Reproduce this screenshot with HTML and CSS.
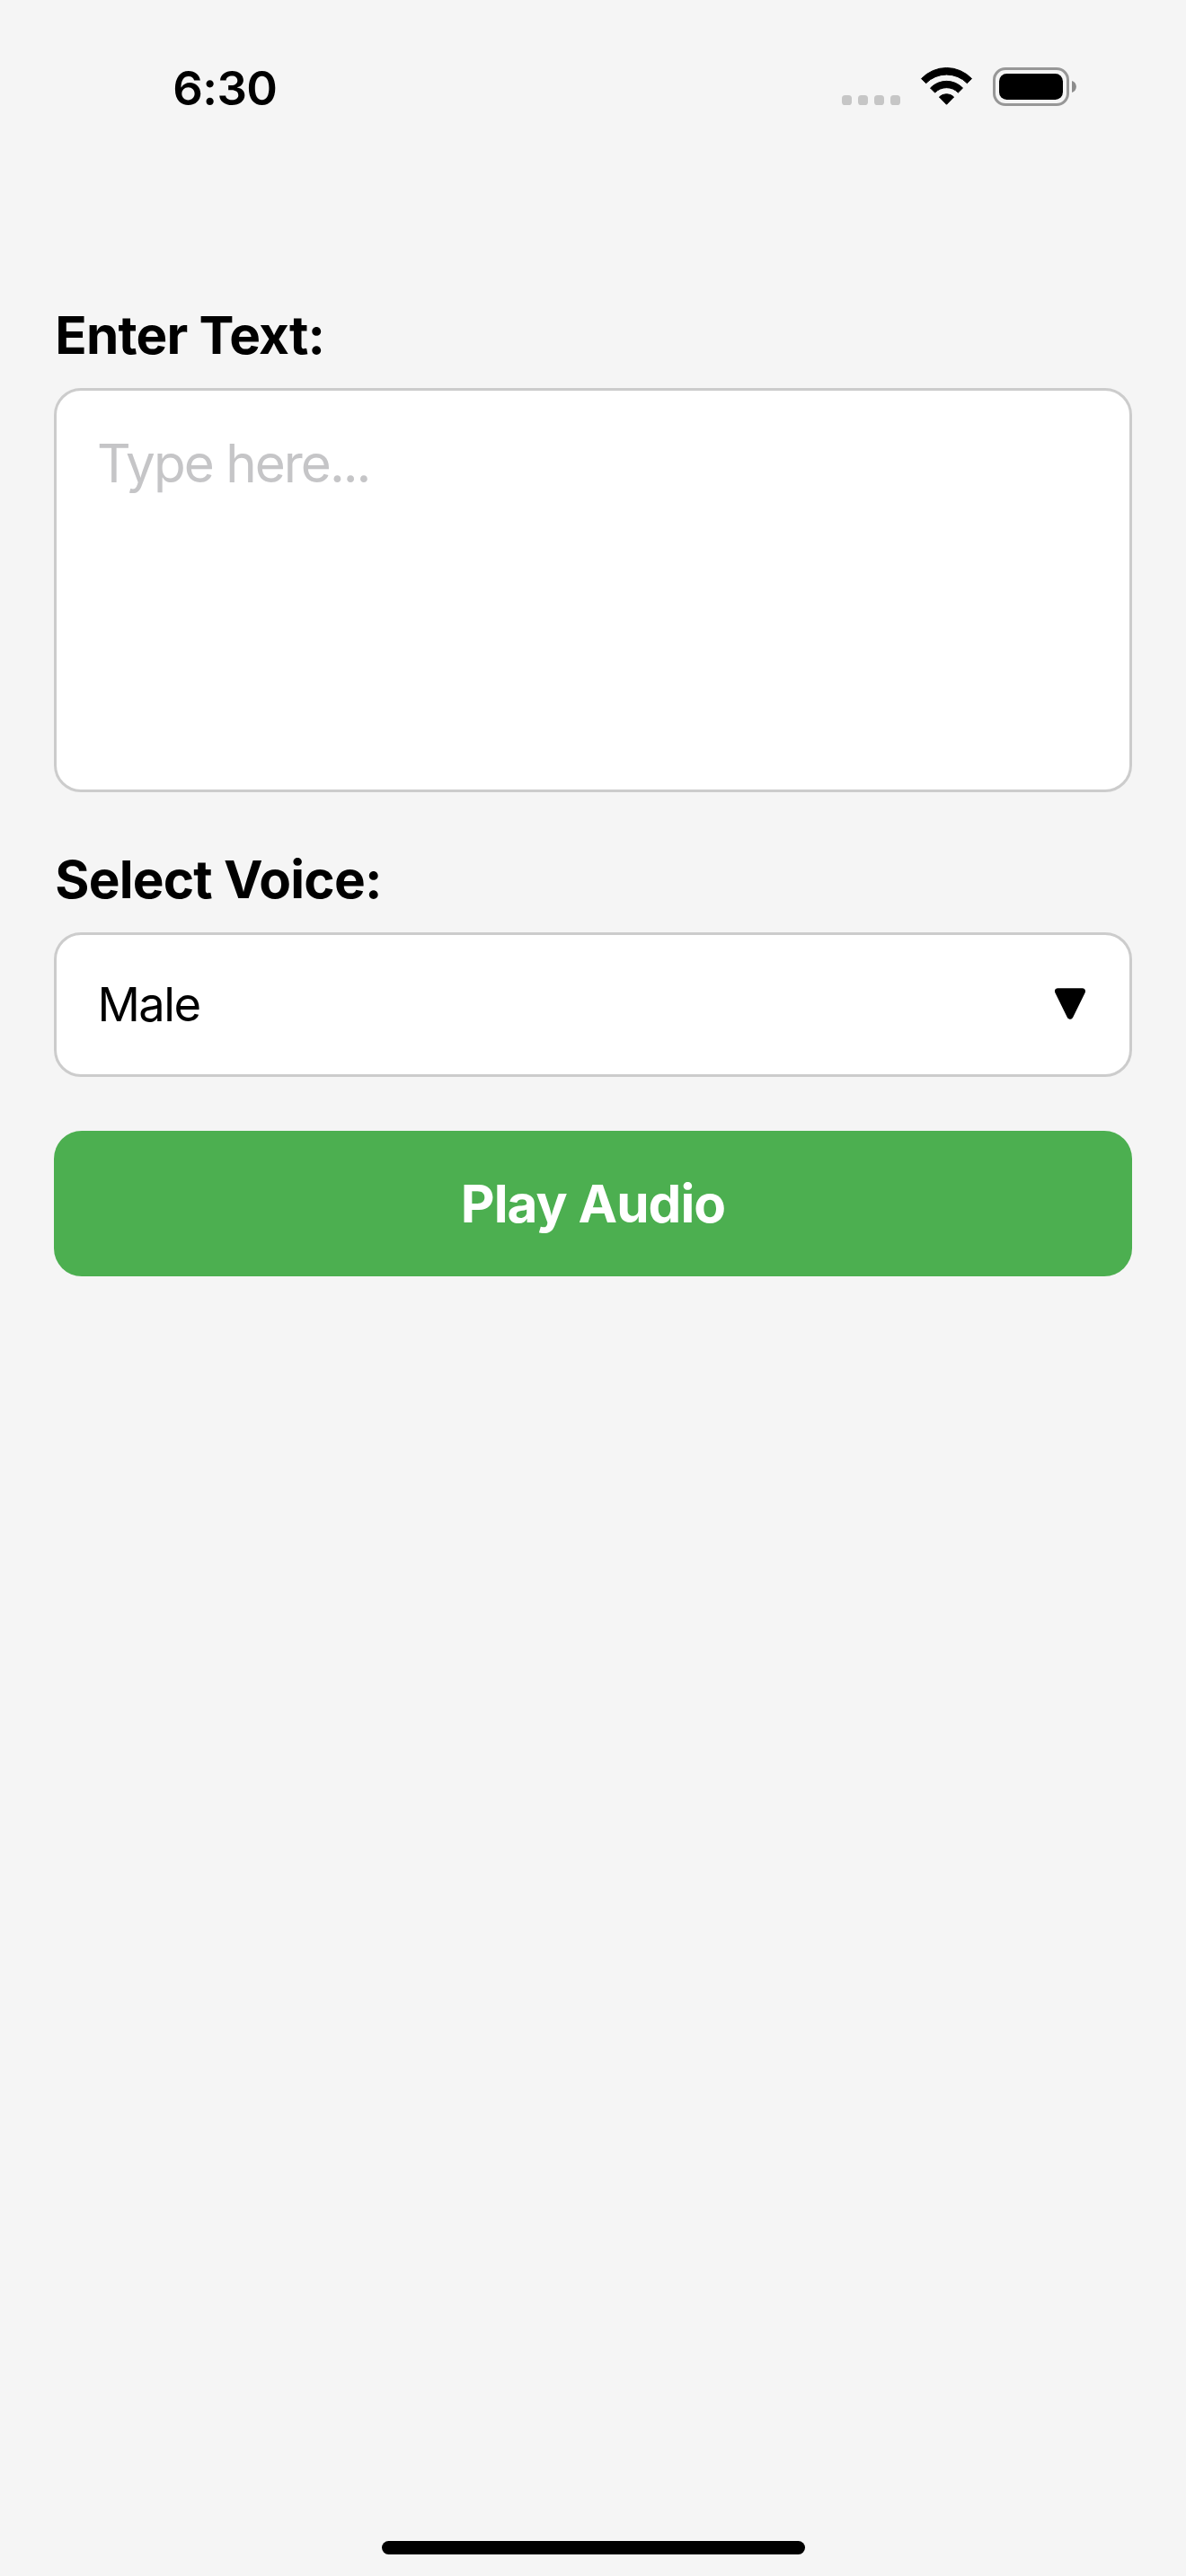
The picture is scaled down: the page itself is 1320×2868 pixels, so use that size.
FILE: index.html
```
<!DOCTYPE html>
<html lang="en">
<head>
<meta charset="utf-8">
<title>Text to Speech</title>
<link rel="stylesheet" href="styles.css">
</head>
<body>
<div class="screen">
  <header class="status-bar">
    <span class="time">6:30</span>
    <svg class="status-icons" width="262" height="46" viewBox="936 74 262 46" aria-hidden="true">
      <g fill="#c6c6c6">
        <rect x="937" y="106" width="11" height="11" rx="3.6"/>
        <rect x="955" y="106" width="11" height="11" rx="3.6"/>
        <rect x="973" y="106" width="11" height="11" rx="3.6"/>
        <rect x="991" y="106" width="11" height="11" rx="3.6"/>
      </g>
      <g stroke="#000" stroke-width="1" stroke-linejoin="round">
        <path d="M1025.5 87.6A38.5 38.5 0 0 1 1081.5 87.6L1076.4 92.7A32 32 0 0 0 1030.6 92.7Z"/>
        <path d="M1035.5 98A25 25 0 0 1 1071.5 98L1066.4 103.1A18 18 0 0 0 1040.6 103.1Z"/>
        <path d="M1045.4 108A11.6 11.6 0 0 1 1061.6 108L1053.5 116.3Z"/>
      </g>
      <rect x="1106.5" y="76.5" width="82" height="40" rx="12.5" fill="none" stroke="#979797" stroke-width="3"/>
      <rect x="1112" y="82" width="71" height="29" rx="8.5"/>
      <path d="M1193 90C1199.5 92 1199.5 101 1193 103Z" fill="#8c8c8c"/>
    </svg>
  </header>
  <main class="form">
    <label class="label" for="text">Enter Text:</label>
    <textarea class="text-input" id="text" placeholder="Type here..."></textarea>
    <div class="label">Select Voice:</div>
    <div class="select">
      <span class="value">Male</span>
      <svg width="34" height="36" viewBox="0 0 34 36" aria-hidden="true">
        <path d="M3.5 3.7H30.5L17 31.2Z" stroke="#000" stroke-width="7" stroke-linejoin="round"/>
      </svg>
    </div>
    <button class="play" type="button">Play Audio</button>
  </main>
  <div class="home-indicator"></div>
</div>
</body>
</html>
```
FILE: styles.css
```
* {
  box-sizing: border-box;
}

body {
  margin: 0;
  background: #f5f5f5;
  color: #000;
  font-family: Inter, "Liberation Sans", sans-serif;
}

.screen {
  display: flex;
  flex-direction: column;
  width: 1320px;
  height: 2868px;
  padding-bottom: 24px;
}

.status-bar {
  display: flex;
  justify-content: space-between;
  align-items: flex-start;
  height: 337px;
  padding: 74px 122px 0 192.3px;
}

.time {
  font-size: 52.6px;
  font-weight: 600;
  line-height: 48px;
  letter-spacing: -0.6px;
}

.status-icons {
  display: block;
}

.form {
  display: flex;
  flex: 1;
  flex-direction: column;
  padding: 0 60px;
}

.label {
  height: 95px;
  padding-left: 1.2px;
  font-size: 58.4px;
  font-weight: 700;
  line-height: 72px;
  letter-spacing: -0.77px;
}

.text-input {
  display: block;
  height: 450px;
  margin: 0 0 61px;
  padding: 45px;
  border: 3px solid #ccc;
  border-radius: 30px;
  background: #fff;
  font: 400 58.4px/72px Inter, "Liberation Sans", sans-serif;
  letter-spacing: -1.98px;
  resize: none;
}

.text-input::placeholder {
  color: #c5c5c7;
  opacity: 1;
}

.select {
  display: flex;
  align-items: center;
  justify-content: space-between;
  height: 161px;
  margin-bottom: 60px;
  padding: 0 49px 1px 45.4px;
  border: 3px solid #ccc;
  border-radius: 30px;
  background: #fff;
  font-size: 52.5px;
  letter-spacing: -1.5px;
}

.value {
  padding-bottom: 1px;
}

.play {
  height: 162px;
  padding: 0;
  border: 0;
  border-radius: 31px;
  background: #4caf50;
  color: #fff;
  font: 700 58.4px/72px Inter, "Liberation Sans", sans-serif;
  letter-spacing: -0.95px;
}

.home-indicator {
  align-self: center;
  width: 471px;
  height: 15px;
  border-radius: 8px;
  background: #000;
}
```
